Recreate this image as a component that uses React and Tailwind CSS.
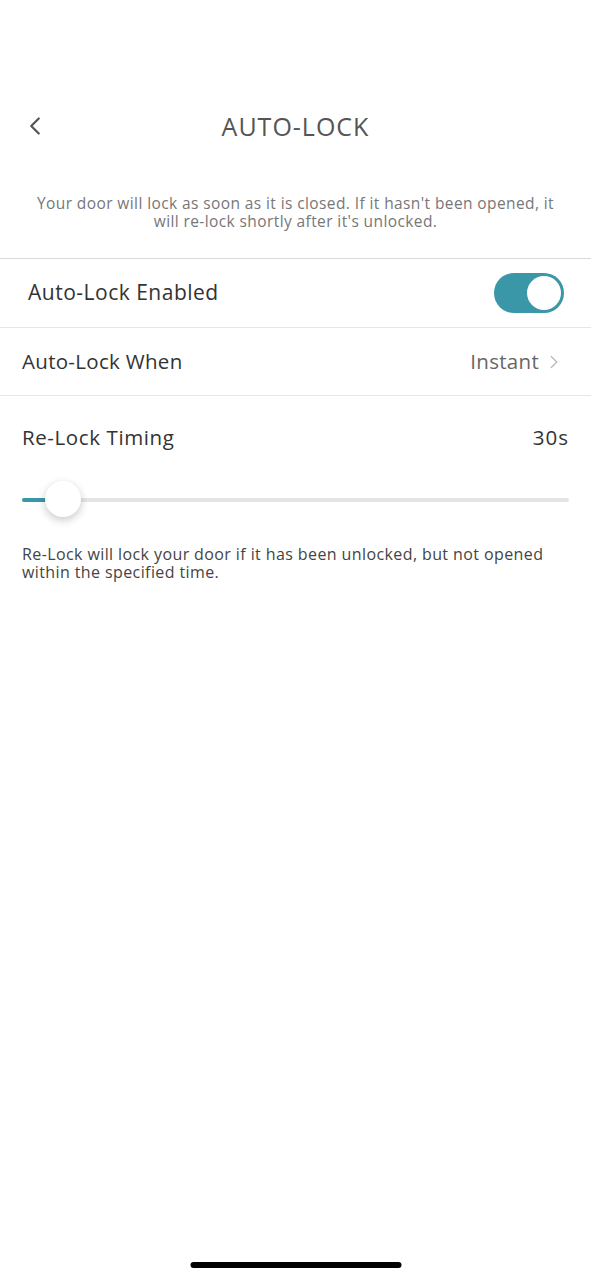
import { ChevronLeft, ChevronRight } from 'lucide-react';

export default function App() {
  return (
    <div className="relative h-[1280px] w-full overflow-hidden bg-white pt-[97px] text-[#333] font-['Open_Sans',sans-serif]">
      {/* header */}
      <div className="relative flex h-[60px] items-center justify-center">
        <button className="absolute left-[20px] top-[14px] text-[#555]">
          <ChevronLeft size={30} strokeWidth={1.8} />
        </button>
        <h1 className="text-[25px] font-medium tracking-[1px] text-[#555]">AUTO-LOCK</h1>
      </div>

      <p className="mt-[37px] px-[24px] text-center text-[15.5px] leading-[18px] tracking-[0.4px] text-[#777]">
        Your door will lock as soon as it is closed. If it hasn't been opened, it will re-lock shortly after it's unlocked.
      </p>

      <div className="mt-[28px] border-t border-[#d9d9d9]" />

      {/* enabled */}
      <div className="flex h-[69px] items-center justify-between pl-[28px] pr-[27px] border-b border-[#e6e6e6]">
        <span className="text-[21px] tracking-[0.5px] text-[#333]">Auto-Lock Enabled</span>
        <div className="flex h-[40px] w-[70px] items-center justify-end rounded-full bg-[#3a97a8] p-[3px]">
          <div className="h-[34px] w-[34px] rounded-full bg-white" />
        </div>
      </div>

      {/* when */}
      <div className="flex h-[68px] items-center justify-between pl-[22px] pr-[26px] border-b border-[#e6e6e6]">
        <span className="text-[20.5px] tracking-[0.3px] text-[#333]">Auto-Lock When</span>
        <div className="flex items-center gap-[4px] text-[#666]">
          <span className="text-[20.5px] tracking-[0.3px]">Instant</span>
          <ChevronRight size={22} strokeWidth={1.5} className="text-[#bbb]" />
        </div>
      </div>

      {/* relock */}
      <div className="px-[22px]">
        <div className="flex items-center justify-between pt-[26px]">
          <span className="text-[20.5px] tracking-[0.6px] text-[#333]">Re-Lock Timing</span>
          <span className="text-[20.5px] tracking-[1px] text-[#333]">30s</span>
        </div>
        <div className="relative mt-[27px] h-[40px]">
          <div className="absolute left-0 right-0 top-[18px] h-[4px] rounded-full bg-[#e4e4e4]" />
          <div className="absolute left-0 top-[18px] h-[4px] w-[26px] rounded-l-full bg-[#3a97a8]" />
          <div className="absolute left-[23px] top-[1px] h-[36px] w-[36px] rounded-full bg-white shadow-[0_3px_8px_rgba(0,0,0,0.22)]" />
        </div>
        <p className="mt-[25px] text-[16px] leading-[18px] tracking-[0.4px] text-[#444]">
          Re-Lock will lock your door if it has been unlocked, but not opened within the specified time.
        </p>
      </div>

      <div className="absolute bottom-[12px] left-1/2 h-[6px] w-[211px] -translate-x-1/2 rounded-full bg-black" />
    </div>
  );
}
